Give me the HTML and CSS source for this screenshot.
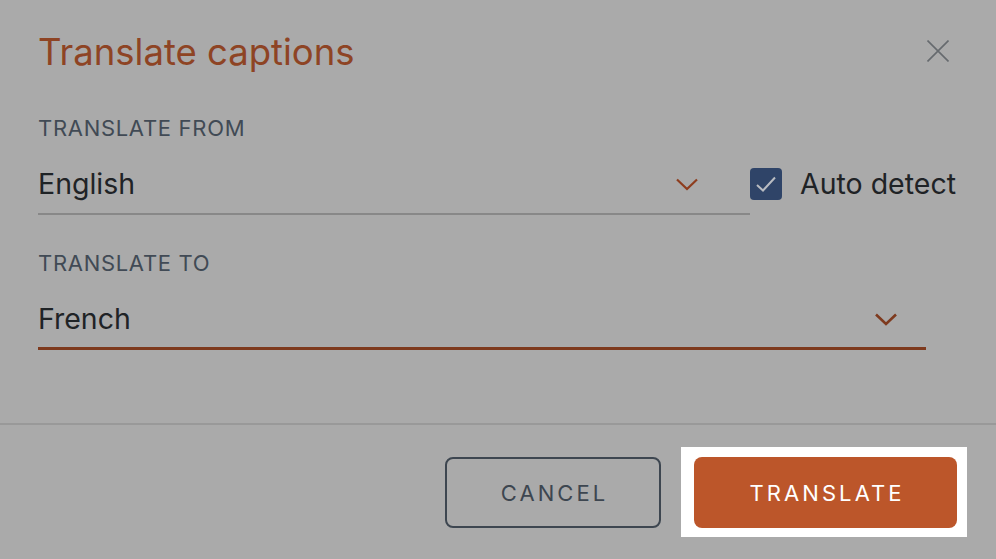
FILE: index.html
```html
<!DOCTYPE html>
<html lang="en">
<head>
  <meta charset="UTF-8" />
  <meta name="viewport" content="width=device-width, initial-scale=1.0"/>
  <title>Translate captions</title>
  <link rel="stylesheet" href="styles.css">
</head>
<body>
  <div class="dialog">
    <div class="dialog-head">
      <h2>Translate captions</h2>
      <button class="close" aria-label="Close">
        <svg width="22" height="22" viewBox="0 0 22 22"><path d="M0.5 0.5 L21.5 21.5 M21.5 0.5 L0.5 21.5" stroke="#666a6e" stroke-width="1.6" fill="none"/></svg>
      </button>
    </div>

    <div class="dialog-body">
      <div class="label">TRANSLATE FROM</div>
      <div class="row">
        <div class="select from">
          <span>English</span>
          <svg class="chev" width="22" height="13" viewBox="0 0 22 13"><path d="M1 1.5 L11 11 L21 1.5" stroke="#8e3d1e" stroke-width="2.2" fill="none"/></svg>
        </div>
        <label class="auto">
          <span class="box">
            <svg width="22" height="18" viewBox="0 0 22 18"><path d="M2 10 L8 15.5 L20 2.5" stroke="#b9bcc2" stroke-width="2" fill="none"/></svg>
          </span>
          Auto detect
        </label>
      </div>

      <div class="label second">TRANSLATE TO</div>
      <div class="select to">
        <span>French</span>
        <svg class="chev" width="22" height="13" viewBox="0 0 22 13"><path d="M1 1.5 L11 11 L21 1.5" stroke="#7e3a1e" stroke-width="2.6" fill="none"/></svg>
      </div>
    </div>

    <div class="dialog-foot">
      <button class="btn cancel">CANCEL</button>
      <div class="spot">
        <button class="btn primary">TRANSLATE</button>
      </div>
    </div>
  </div>
</body>
</html>
```

FILE: styles.css
```css
body {
  margin: 0;
  padding: 0;
  background-color: #aaaaaa;
  font-family: 'Inter', 'Noto Sans', sans-serif;
}
.dialog {
  width: 996px;
  height: 559px;
  display: flex;
  flex-direction: column;
}
.dialog-head {
  display: flex;
  justify-content: space-between;
  align-items: flex-start;
  padding: 28px 47px 0 38px;
  height: 42px;
}
.dialog-head h2 {
  margin: 0;
  font-size: 36.5px;
  font-weight: 400;
  color: #8e4424;
  line-height: 48px;
}
.close {
  background: none;
  border: 0;
  padding: 0;
  margin-top: 12px;
  display: flex;
}
.dialog-body {
  padding: 46px 38px 0 38px;
  height: 307px;
  border-bottom: 2px solid #999999;
}
.label {
  font-size: 22px;
  letter-spacing: 0.7px;
  color: #414a55;
  line-height: 24px;
}
.label.second {
  margin-top: 36px;
}
.row {
  display: flex;
  align-items: center;
}
.select {
  display: flex;
  justify-content: space-between;
  align-items: center;
  font-size: 28.5px;
  line-height: 32px;
  color: #1f2326;
}
.select.from {
  width: 660px;
  padding: 28px 52px 13px 0;
  border-bottom: 2px solid #888888;
}
.select.to {
  width: 859px;
  padding: 28px 29px 12px 0;
  border-bottom: 3px solid #7e3a1e;
}
.auto {
  display: flex;
  align-items: center;
  gap: 18px;
  font-size: 28.5px;
  color: #1f2326;
  margin-top: 12px;
}
.box {
  width: 32px;
  height: 32px;
  border-radius: 4px;
  background: #2f4468;
  display: flex;
  align-items: center;
  justify-content: center;
}
.dialog-foot {
  display: flex;
  justify-content: flex-end;
  align-items: flex-start;
  gap: 20px;
  padding: 22px 29px 0 0;
}
.btn {
  font-family: inherit;
  font-size: 22px;
  letter-spacing: 3.1px;
  text-indent: 3.1px;
  border-radius: 8px;
  height: 71px;
  cursor: pointer;
}
.cancel {
  width: 216px;
  margin-top: 10px;
  background: none;
  border: 2px solid #3d4650;
  color: #3d4650;
}
.spot {
  background: #ffffff;
  padding: 10px 10px 9px 13px;
}
.primary {
  width: 263px;
  background: #bc562a;
  border: 0;
  color: #ffffff;
  display: block;
}
```
